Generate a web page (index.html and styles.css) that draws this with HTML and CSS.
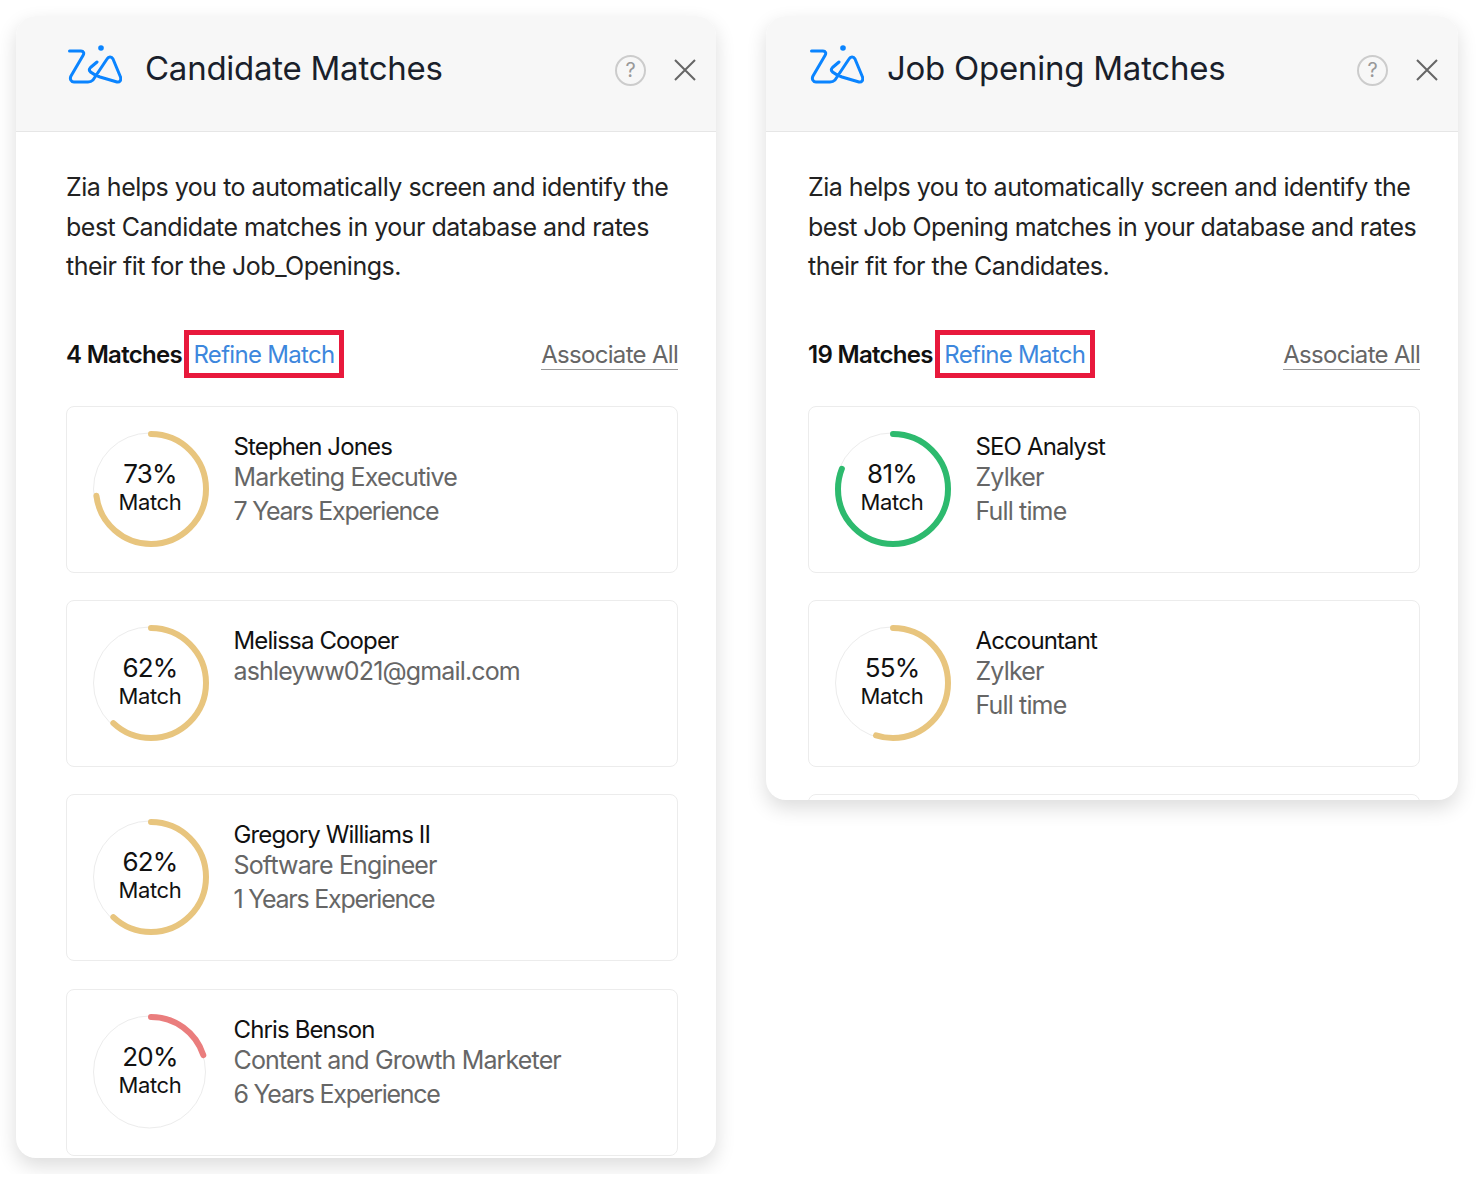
FILE: index.html
```html
<!DOCTYPE html>
<html>
  <head>
    <meta charset="utf-8" />
    <title>Zia Matches</title>
    <link rel="stylesheet" href="styles.css">
  </head>
  <body>
    <div class="page">
      <div class="panel panelLeft">
        <div class="panelHead">
          <svg class="ziaLogo" viewBox="0 0 56 40" width="56" height="40"><use href="#zia"></use></svg>
          <h1>Candidate Matches</h1>
          <span class="helpIcon">?</span>
          <svg class="closeIcon" viewBox="0 0 22 22" width="22" height="22"><path d="M1 1 L21 21 M21 1 L1 21"></path></svg>
        </div>
        <div class="panelBody">
          <p class="intro">Zia helps you to automatically screen and identify the best Candidate matches in your database and rates their fit for the Job_Openings.</p>
          <div class="matchBar">
            <b>4 Matches</b>
            <a class="refine">Refine Match</a>
            <a class="assocAll">Associate All</a>
          </div>
          <div class="card">
            <div class="ring">
              <svg viewBox="0 0 120 120" width="120" height="120"><circle class="track" cx="59.5" cy="59" r="56"></circle><circle class="arc gold" cx="61" cy="59" r="55" pathLength="100" stroke-dasharray="73 100" transform="rotate(-90 61 59)"></circle></svg>
              <div class="ringText"><span class="pct">73%</span><span class="matchWord">Match</span></div>
            </div>
            <div class="info"><div class="name">Stephen Jones</div><div class="sub">Marketing Executive</div><div class="sub exp">7 Years Experience</div></div>
          </div>
          <div class="card">
            <div class="ring">
              <svg viewBox="0 0 120 120" width="120" height="120"><circle class="track" cx="59.5" cy="59" r="56"></circle><circle class="arc gold" cx="61" cy="59" r="55" pathLength="100" stroke-dasharray="62 100" transform="rotate(-90 61 59)"></circle></svg>
              <div class="ringText"><span class="pct">62%</span><span class="matchWord">Match</span></div>
            </div>
            <div class="info"><div class="name">Melissa Cooper</div><div class="sub">ashleyww021@gmail.com</div></div>
          </div>
          <div class="card">
            <div class="ring">
              <svg viewBox="0 0 120 120" width="120" height="120"><circle class="track" cx="59.5" cy="59" r="56"></circle><circle class="arc gold" cx="61" cy="59" r="55" pathLength="100" stroke-dasharray="62 100" transform="rotate(-90 61 59)"></circle></svg>
              <div class="ringText"><span class="pct">62%</span><span class="matchWord">Match</span></div>
            </div>
            <div class="info"><div class="name">Gregory Williams II</div><div class="sub">Software Engineer</div><div class="sub exp">1 Years Experience</div></div>
          </div>
          <div class="card">
            <div class="ring">
              <svg viewBox="0 0 120 120" width="120" height="120"><circle class="track" cx="59.5" cy="59" r="56"></circle><circle class="arc red" cx="61" cy="59" r="55" pathLength="100" stroke-dasharray="20 100" transform="rotate(-90 61 59)"></circle></svg>
              <div class="ringText"><span class="pct">20%</span><span class="matchWord">Match</span></div>
            </div>
            <div class="info"><div class="name">Chris Benson</div><div class="sub">Content and Growth Marketer</div><div class="sub exp">6 Years Experience</div></div>
          </div>
        </div>
      </div>

      <div class="panel panelRight">
        <div class="panelHead">
          <svg class="ziaLogo" viewBox="0 0 56 40" width="56" height="40">
            <defs>
              <g id="zia">
                <path class="ziaStroke" d="M3.500 7 H15 C17.500 7 18.500 9 17 11.500 L5 32 C3.500 35 5 38 8 38 H22 C24 38 25.500 37.500 27 36 L41 15 C42.500 12.500 45.500 12 47 15 L54.500 33 C55.500 36.500 53.500 38.500 51 38 L34 33 C30 31.500 27 30 24.500 28 C23 26.500 23 25 24.500 23.500 L31 18"></path>
                <circle class="ziaDot" cx="35" cy="4" r="2.800"></circle>
              </g>
            </defs>
            <use href="#zia"></use>
          </svg>
          <h1>Job Opening Matches</h1>
          <span class="helpIcon">?</span>
          <svg class="closeIcon" viewBox="0 0 22 22" width="22" height="22"><path d="M1 1 L21 21 M21 1 L1 21"></path></svg>
        </div>
        <div class="panelBody">
          <p class="intro">Zia helps you to automatically screen and identify the <span class="tightLine">best Job Opening matches in your database and rates</span> their fit for the Candidates.</p>
          <div class="matchBar">
            <b>19 Matches</b>
            <a class="refine">Refine Match</a>
            <a class="assocAll">Associate All</a>
          </div>
          <div class="card">
            <div class="ring">
              <svg viewBox="0 0 120 120" width="120" height="120"><circle class="track" cx="59.5" cy="59" r="56"></circle><circle class="arc green" cx="61" cy="59" r="55" pathLength="100" stroke-dasharray="81 100" transform="rotate(-90 61 59)"></circle></svg>
              <div class="ringText"><span class="pct">81%</span><span class="matchWord">Match</span></div>
            </div>
            <div class="info"><div class="name">SEO Analyst</div><div class="sub">Zylker</div><div class="sub">Full time</div></div>
          </div>
          <div class="card">
            <div class="ring">
              <svg viewBox="0 0 120 120" width="120" height="120"><circle class="track" cx="59.5" cy="59" r="56"></circle><circle class="arc gold" cx="61" cy="59" r="55" pathLength="100" stroke-dasharray="55 100" transform="rotate(-90 61 59)"></circle></svg>
              <div class="ringText"><span class="pct">55%</span><span class="matchWord">Match</span></div>
            </div>
            <div class="info"><div class="name">Accountant</div><div class="sub">Zylker</div><div class="sub">Full time</div></div>
          </div>
          <div class="card"></div>
        </div>
      </div>
    </div>
  </body>
</html>
```
FILE: styles.css
```css
html {
  background-color: white;
  color: #111;
  font-family: "Inter", sans-serif;
}

body {
  margin: 0;
}

.page {
  display: flex;
  align-items: flex-start;
  gap: 50px;
  padding: 16px;
}

.panel {
  background: white;
  border-radius: 20px;
  box-shadow: 0 8px 20px rgba(0, 0, 0, 0.14);
  overflow: hidden;
}

.panelLeft {
  width: 700px;
  height: 1142px;
}

.panelRight {
  width: 692px;
  height: 784px;
}

.panelHead {
  display: flex;
  align-items: center;
  height: 103px;
  background: #f7f7f7;
  border-bottom: 1px solid #e6e6e6;
  padding: 0 20px 12px 50px;
}

.panelRight .panelHead {
  padding-left: 42px;
}

.ziaLogo {
  flex: none;
  margin: 0 23px 7px 0;
}

.ziaStroke {
  fill: none;
  stroke: #0a84ff;
  stroke-width: 3;
  stroke-linecap: round;
  stroke-linejoin: round;
}

.ziaDot {
  fill: #0a84ff;
}

h1 {
  flex: 1;
  margin: 0;
  font-size: 33px;
  font-weight: 400;
  letter-spacing: -0.25px;
  color: #1a1f2b;
}

.helpIcon {
  flex: none;
  width: 27px;
  height: 27px;
  border: 2px solid #ccc;
  border-radius: 50%;
  margin: 5px 28px 0 0;
  color: #999;
  font-size: 20px;
  line-height: 27px;
  text-align: center;
}

.closeIcon {
  flex: none;
  margin-top: 5px;
}

.closeIcon path {
  fill: none;
  stroke: #666;
  stroke-width: 2;
}

.panelBody {
  padding: 36px 38px 0 50px;
}

.panelRight .panelBody {
  padding-left: 42px;
}

.intro {
  margin: 0;
  font-size: 25px;
  line-height: 39.500px;
  letter-spacing: -0.5px;
  color: #222;
}

.tightLine {
  letter-spacing: -0.6px;
}

.matchBar {
  display: flex;
  align-items: center;
  height: 48px;
  margin: 43.500px 0 28px;
  font-size: 24px;
  letter-spacing: -0.7px;
}

.matchBar b {
  font-weight: 600;
}

.refine {
  border: 5px solid #e8193c;
  padding: 1px 4.500px 0;
  margin-left: 2px;
  height: 37px;
  line-height: 38px;
  color: #3d87dd;
}

.assocAll {
  margin: 2px 0 0 auto;
  color: #666;
  border-bottom: 1px solid #999;
  line-height: 28px;
}

.card {
  display: flex;
  box-sizing: border-box;
  height: 167px;
  margin-bottom: 27.200px;
  padding: 23px 0 0 23px;
  border: 1px solid #ececec;
  border-radius: 8px;
}

.ring {
  position: relative;
  flex: none;
  width: 120px;
  height: 120px;
  margin-right: 23.500px;
}

.track {
  fill: none;
  stroke: #ececec;
  stroke-width: 1;
}

.arc {
  fill: none;
  stroke-width: 6;
  stroke-linecap: round;
}

.gold {
  stroke: #e8c57e;
}

.green {
  stroke: #2dba6e;
}

.red {
  stroke: #ea7d7d;
}

.ringText {
  position: absolute;
  top: 0;
  left: 0;
  width: 120px;
  height: 115px;
  display: flex;
  flex-direction: column;
  align-items: center;
  justify-content: center;
}

.pct {
  font-size: 26px;
  line-height: 30px;
  letter-spacing: -0.8px;
}

.matchWord {
  font-size: 22px;
  line-height: 27px;
  letter-spacing: -0.4px;
}

.info {
  padding-top: 4px;
}

.name {
  font-size: 24px;
  line-height: 26px;
  letter-spacing: -0.87px;
  color: #111;
}

.sub {
  font-size: 25px;
  line-height: 34px;
  letter-spacing: -0.85px;
  color: #666;
}

.exp {
  letter-spacing: -1.25px;
}
```
